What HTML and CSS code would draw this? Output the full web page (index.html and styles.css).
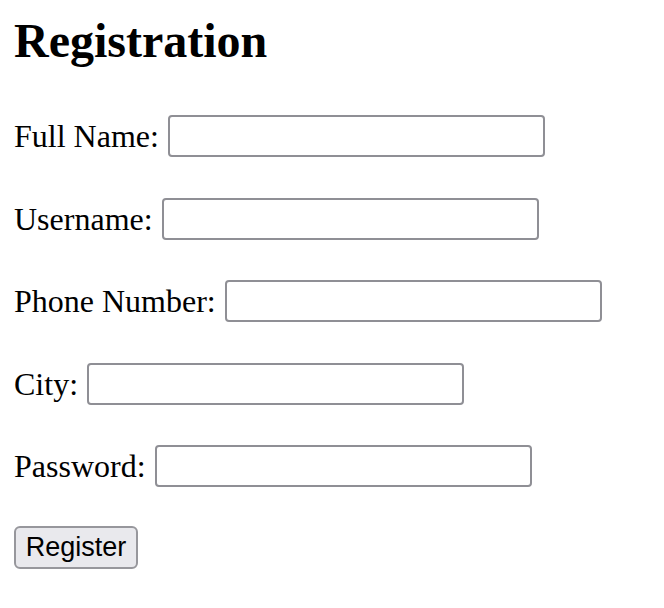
FILE: index.html
```html
<!DOCTYPE html>
<html lang="en">
<head>
<meta charset="utf-8">
<title>Registration</title>
<link rel="stylesheet" href="styles.css">
</head>
<body>
<section class="page">
  <h1 class="title">Registration</h1>
  <form class="form">
    <div class="row"><label class="label" for="fullname">Full Name:</label><input class="field" id="fullname" type="text"></div>
    <div class="row"><label class="label" for="username">Username:</label><input class="field" id="username" type="text"></div>
    <div class="row"><label class="label" for="phone">Phone Number:</label><input class="field" id="phone" type="tel"></div>
    <div class="row"><label class="label" for="city">City:</label><input class="field" id="city" type="text"></div>
    <div class="row"><label class="label" for="password">Password:</label><input class="field" id="password" type="password"></div>
    <div class="actions"><button class="btn" type="submit">Register</button></div>
  </form>
</section>
</body>
</html>
```

FILE: styles.css
```css
html, body {
  margin: 0;
  padding: 0;
  background: #ffffff;
}

.page {
  padding: 13px 14px 0 14px;
  font-family: "Liberation Serif", "Times New Roman", serif;
  color: #000;
}

.title {
  margin: 0;
  font-size: 48px;
  line-height: 56px;
  font-weight: bold;
}

.form {
  margin-top: 46px;
  display: flex;
  flex-direction: column;
  gap: 40.5px;
}

.row {
  display: flex;
  align-items: center;
  gap: 9px;
  height: 42px;
}

.label {
  font-size: 32px;
  line-height: 36px;
  white-space: nowrap;
}

.field {
  box-sizing: border-box;
  width: 377px;
  height: 42px;
  margin: 0;
  padding: 0 6px;
  border: 2px solid #8f8f95;
  border-radius: 4px;
  background: #fff;
  font-size: 26px;
}

.actions {
  margin-top: -1.5px;
}

.btn {
  box-sizing: border-box;
  width: 124px;
  height: 43px;
  margin: 0;
  padding: 0;
  border: 2px solid #97979c;
  border-radius: 6px;
  background: #e9e9ed;
  color: #000;
  font-family: "Liberation Sans", Arial, sans-serif;
  font-size: 27px;
  line-height: 1;
}
```
